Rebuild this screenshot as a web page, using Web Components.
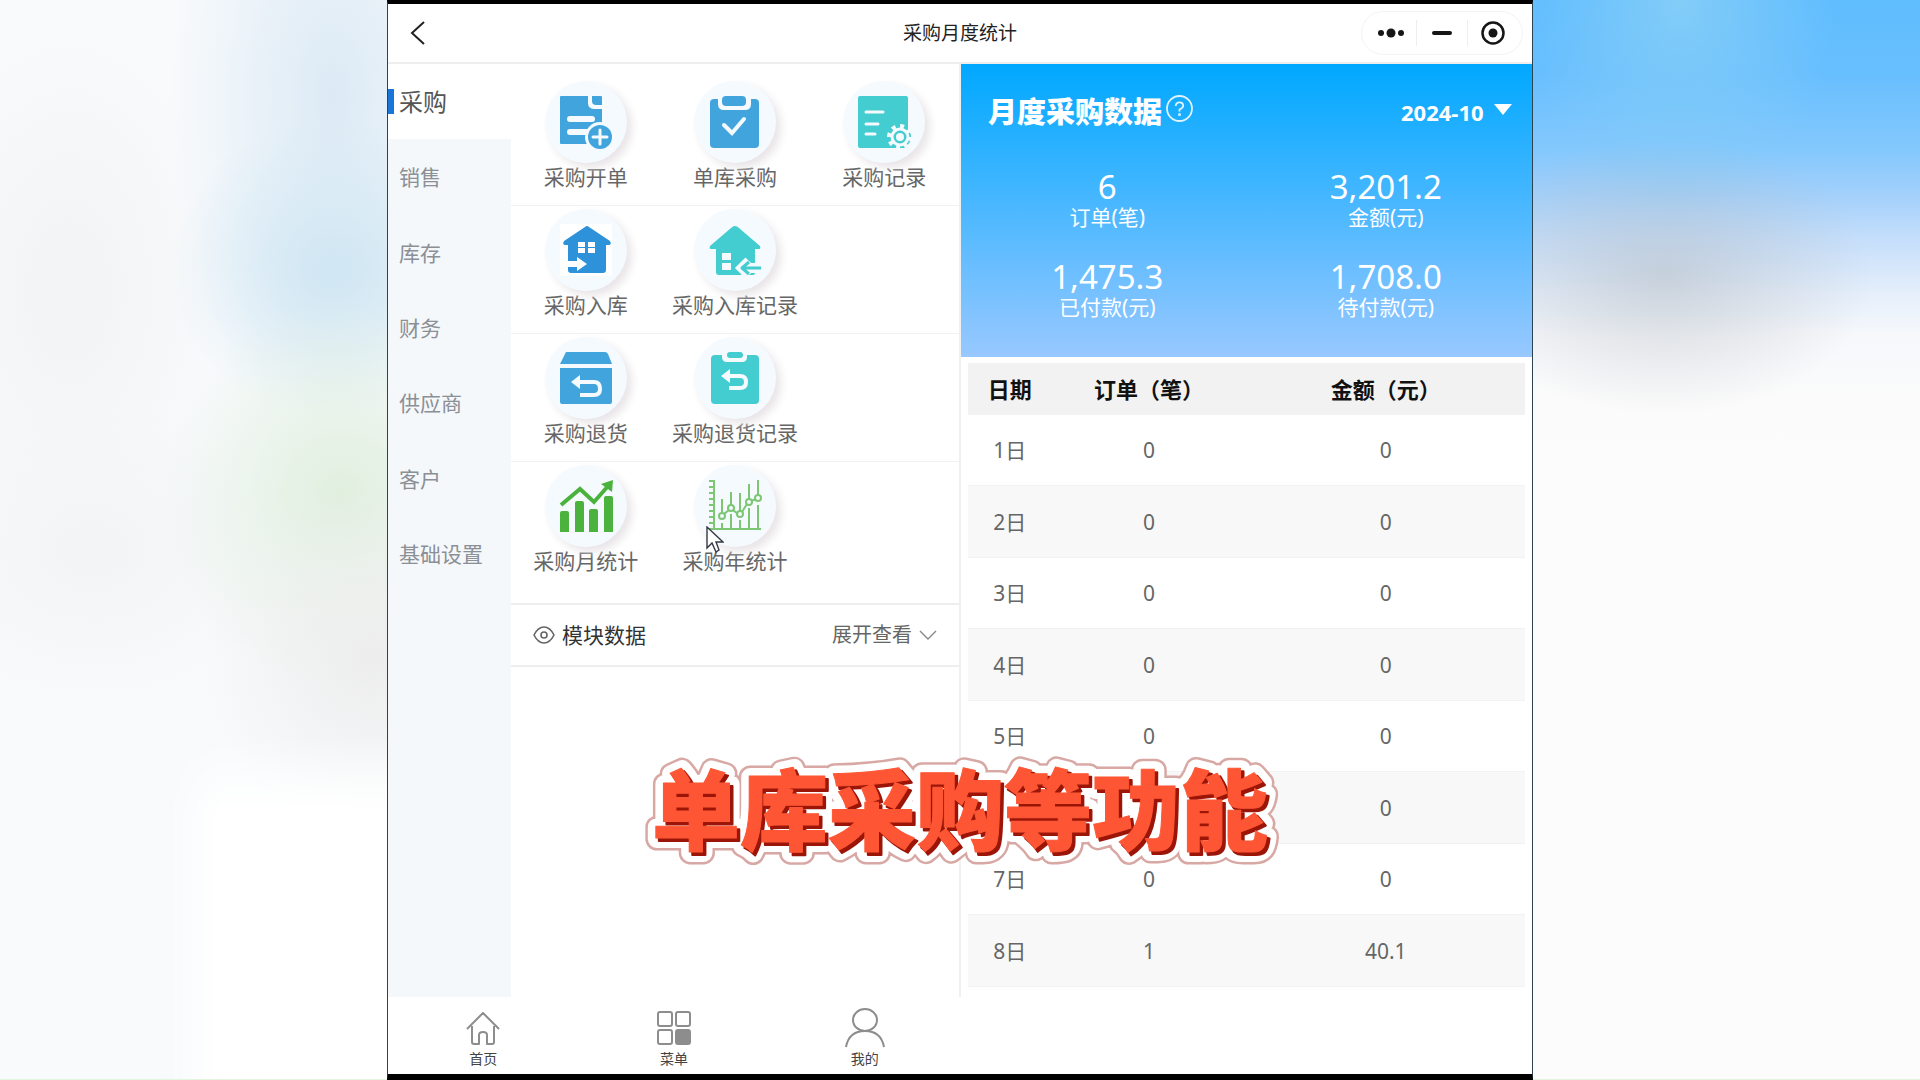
<!DOCTYPE html>
<html lang="zh-CN">
<head>
<meta charset="utf-8">
<title>采购月度统计</title>
<style>
  html, body { margin: 0; height: 100%; }
  body { font-family: "Noto Sans", "Noto Sans CJK SC", sans-serif; color: #333; background: #fcfcfc; overflow: hidden; }
</style>
</head>
<body>
<video-stage>
  <app-window>
    <title-bar slot="header">采购月度统计</title-bar>
    <side-nav slot="side"></side-nav>
    <module-menu slot="menu"></module-menu>
    <month-report slot="report"></month-report>
    <tab-bar slot="footer"></tab-bar>
  </app-window>
  <caption-text slot="caption" text="单库采购等功能"></caption-text>
</video-stage>

<script>
const define = (name, html, init) => {
  const tpl = document.createElement('template');
  tpl.innerHTML = '<style>*{box-sizing:border-box}button,select{font:inherit;color:inherit;background:none;border:0;margin:0;padding:0}a{color:inherit;text-decoration:none}svg{display:block}</style>' + html;
  customElements.define(name, class extends HTMLElement {
    constructor() { super(); this.attachShadow({ mode: 'open' }); }
    connectedCallback() {
      if (this.shadowRoot.firstChild) return;
      this.shadowRoot.append(tpl.content.cloneNode(true));
      if (init) init(this.shadowRoot, this);
    }
  });
};

const BLUE = '#41a4dd', TEAL = '#43cdd0', PALE = '#f5faff', GREEN = '#4bb33d', LIME = '#7cc674';
const icons = {
  order: `<path fill="${BLUE}" d="M1 0H28V7Q28 13 35 13H42V48H1Q0 48 0 47V1Q0 0 1 0Z"/><path fill="${BLUE}" d="M32 0H41Q42 0 42 1V9H36Q32 9 32 5Z"/>
    <path d="M10 23H32M10 36H30" stroke="${PALE}" stroke-width="6" stroke-linecap="round"/><circle cx="40" cy="41" r="15" fill="${PALE}"/><circle cx="40" cy="41" r="12" fill="${BLUE}"/><path d="M33 41H47M40 34V48" stroke="${PALE}" stroke-width="3" stroke-linecap="round"/>`,
  clip: `<rect x="1" y="3" width="49" height="49" rx="4" fill="${BLUE}"/><path fill="${PALE}" d="M9 0H42V8Q42 14 36 14H15Q9 14 9 8Z"/><rect x="13" y="0" width="24" height="10" rx="4" fill="${BLUE}"/>
    <path d="M15 29L23 37L35 23" fill="none" stroke="${PALE}" stroke-width="4" stroke-linecap="round"/>`,
  record: `<rect width="50" height="52" rx="2" fill="${TEAL}"/><path d="M8 16H25M8 28H20M8 38H17" stroke="${PALE}" stroke-width="3" stroke-linecap="round"/>
    <circle cx="42" cy="41" r="11" fill="${TEAL}"/><circle cx="42" cy="41" r="11" fill="none" stroke="${PALE}" stroke-width="4" stroke-dasharray="4 4.6"/><circle cx="42" cy="41" r="8" fill="none" stroke="${PALE}" stroke-width="3"/><circle cx="42" cy="41" r="4" fill="${PALE}"/>`,
  houseIn: `<rect width="52" height="52" fill="#fff"/><path fill="#2e92da" d="M25 3Q27 1 29 3L50 17Q52 21 49 21H46V46Q46 49 43 49H11Q8 49 8 46V21H5Q2 21 4 17Z"/>
    <path fill="#fff" d="M18 18h7v5h-7zM28 18h7v5h-7zM18 24h7v5h-7zM28 24h7v5h-7zM7 37H17V33L27 40L17 47V43H7Z"/>`,
  houseOut: `<path fill="${TEAL}" d="M22 4Q26 0 30 4L51 22Q52 25 50 25H46V49Q46 51 43 51H10Q7 51 7 48V25H2Q0 25 1 22Z"/><path fill="${PALE}" d="M13 29h9v7h-9zM13 39h9v7h-9z"/>
    <path d="M40 37L33 44L40 51M34 44H48" fill="none" stroke="${PALE}" stroke-width="10"/><path d="M40 38L33 44L40 50" fill="none" stroke="${TEAL}" stroke-width="3" stroke-linejoin="round"/><path d="M34 44H52" stroke="${TEAL}" stroke-width="3"/>`,
  boxBack: `<path fill="${BLUE}" d="M7 0H45Q47 0 48 2L52 12H0L5 2Q5 0 7 0ZM0 16H52V50Q52 52 50 52H2Q0 52 0 50Z"/><path d="M18 30H34Q40 30 40 37Q40 43 34 43H20" fill="none" stroke="${PALE}" stroke-width="4"/><path fill="${PALE}" d="M11 30L20 23V37Z"/>`,
  clipBack: `<rect x="2" y="3" width="48" height="49" rx="4" fill="${TEAL}"/><path fill="${PALE}" d="M13 0H38V5Q38 10 33 10H18Q13 10 13 5Z"/><rect x="18" y="0" width="16" height="6" rx="3" fill="${TEAL}"/><path d="M19 24H31Q37 24 37 30Q37 36 31 36H20" fill="none" stroke="${PALE}" stroke-width="4"/><path fill="${PALE}" d="M12 24L21 17V31Z"/>`,
  bars: `<path fill="${GREEN}" d="M0 33q0-2 2-2h5q2 0 2 2V52H0zM15 23q0-2 2-2h5q2 0 2 2V52H15zM29 31q0-2 2-2h5q2 0 2 2V52H29zM44 18q0-2 2-2h5q2 0 2 2V52H44z"/><path d="M1 25L20 9L34 22L49 5" fill="none" stroke="${GREEN}" stroke-width="4"/><path fill="${GREEN}" d="M41 4L53 0L52 12Z"/>`,
  trend: `<g fill="none" stroke="${LIME}" stroke-width="2"><path d="M5 0V49H52"/><path d="M0 1H4M0 7H4M0 13H4M0 19H4M0 25H4M0 31H4M0 37H4M0 43H4M0 49H4"/><path d="M13 19V32M13 43V48M22 12V25M22 34V48M31 13V31M31 40V48M40 4V19M40 28V48M49 0V15M49 25V48"/><path d="M15 34L20 30M24 30L29 34M33 32L38 24M42 21L47 19"/><circle cx="13" cy="36" r="3"/><circle cx="22" cy="28" r="3"/><circle cx="31" cy="34" r="3"/><circle cx="40" cy="22" r="3"/><circle cx="49" cy="18" r="3"/></g>`
};

/* Page: blurred side areas with the app window between them */
define('video-stage', `<style>
  :host { display: grid; grid-template-columns: 387fr 1146fr 387fr; height: 100vh; position: relative; }
  .side { border-bottom: 1px solid #e2f5dd; }
  .left { display: flex; justify-content: flex-end; align-items: flex-end; background:
    radial-gradient(ellipse 44% 16% at 96% 61%, #ededed 0%, #ededed00 100%),
    radial-gradient(ellipse 46% 18% at 88% 46%, #e0efde 0%, #e0efde00 100%),
    radial-gradient(ellipse 42% 14% at 86% 25%, #d1e7f3 8%, #d1e7f300 100%),
    radial-gradient(ellipse 42% 30% at 86% 9%, #dceaf5 0%, #dceaf500 100%),
    radial-gradient(ellipse 40% 24% at 18% 27%, #f3f4f5 20%, #f3f4f500 100%),
    radial-gradient(ellipse 50% 14% at 24% 51%, #f2f4f5 10%, #f2f4f500 100%), #f8fafc; }
  .left::after { content: ""; width: 58%; height: 32%; background: linear-gradient(90deg, #fff0, #fff 26%);
    -webkit-mask-image: linear-gradient(#0000, #000 24%); mask-image: linear-gradient(#0000, #000 24%); }
  .right { background:
    radial-gradient(ellipse 54% 13% at 34% 25.5%, #b4bac088 0%, #b4bac000 100%),
    radial-gradient(ellipse 40% 20% at 38% 0%, #82ccf8 0%, #82ccf800 100%),
    linear-gradient(#60bdfe 0%, #68bffe 7%, #84c8fd 14%, #a2d0fb 18%, #c4defb 22%, #e4eefb 27%, #f6f8fb 31%, #fbfbfb 37%, #fcfcfc 45%); }
  .caption { position: absolute; left: 0; right: 0; top: 70%; display: flex; justify-content: center; pointer-events: none; }
</style><div class="side left"></div><slot></slot><div class="side right"></div><div class="caption"><slot name="caption"></slot></div>`);

define('app-window', `<style>
  :host { display: flex; flex-direction: column; min-width: 0; background: #fff; border: solid #000; border-width: 4px 1px 6px; border-left-color: #2d4350; border-right-color: #2d4350; }
  .body { flex: 1; min-height: 0; display: grid; grid-template-columns: 123fr 450fr 571fr; }
</style><slot name="header"></slot><div class="body"><slot name="side"></slot><slot name="menu"></slot><slot name="report"></slot></div><slot name="footer"></slot>`);

define('title-bar', `<style>
  :host { display: grid; grid-template-columns: 1fr auto 1fr; align-items: center; height: 58px; border-bottom: 2px solid #eee; font-size: 19px; line-height: 28px; color: #222; }
  .back { justify-self: start; margin-left: 22px; }
  .capsule { justify-self: end; margin-right: 9px; padding: 0 4px; display: flex; align-items: center; width: 162px; height: 44px; border: 1px solid #f3f3f3; border-radius: 22px; }
  .capsule button { flex: 1; height: 26px; display: flex; align-items: center; justify-content: center; }
  .capsule button + button { border-left: 1px solid #eee; }
</style>
<button class="back" aria-label="返回"><svg width="17" height="24" viewBox="0 0 17 24" fill="none" stroke="#222" stroke-width="2"><path d="M14 1L2 12L14 23"/></svg></button>
<span><slot></slot></span>
<div class="capsule">
<button aria-label="更多"><svg width="28" height="12" viewBox="0 0 28 12" fill="#161616"><circle cx="4" cy="6" r="3"/><circle cx="14" cy="6" r="4.5"/><circle cx="24" cy="6" r="3"/></svg></button>
<button aria-label="最小化"><svg width="20" height="4" viewBox="0 0 20 4"><rect width="20" height="4" rx="2" fill="#161616"/></svg></button>
<button aria-label="关闭"><svg width="26" height="26" viewBox="0 0 26 26"><circle cx="13" cy="13" r="10.500" fill="none" stroke="#161616" stroke-width="2.500"/><circle cx="13" cy="13" r="4.500" fill="#161616"/></svg></button>
</div>`);

define('side-nav', `<style>
  :host { display: block; background: #f5f8fa; }
  nav { display: grid; grid-auto-rows: 1fr; height: 528px; }
  a { display: flex; align-items: center; padding-left: 11px; font-size: 21px; line-height: 28px; color: #8b8f96; position: relative; }
  a.on { background: #fff; font-size: 24px; color: #555; }
  a.on::before { content: ""; position: absolute; left: 0; width: 6px; height: 25px; background: #1976d8; }
</style><nav></nav>`, root => {
  root.querySelector('nav').innerHTML = ['采购', '销售', '库存', '财务', '供应商', '客户', '基础设置']
    .map((t, i) => `<a href="#"${i ? '' : ' class="on" aria-current="page"'}>${t}</a>`).join('');
});

define('menu-tile', `<style>
  :host { display: block; min-width: 0; }
  a { display: flex; flex-direction: column; align-items: center; padding-top: 3px; font-size: 21px; line-height: 28px; color: #666; white-space: nowrap; }
  .disc { position: relative; width: 82px; height: 82px; border-radius: 50%; background: ${PALE}; box-shadow: 5px 5px 8px #e9e5e8; display: flex; align-items: center; justify-content: center; }
  ::slotted(*) { position: absolute; left: 12px; top: 61px; }
</style><a href="#"><span class="disc"><svg width="52" height="52" viewBox="0 0 52 52" overflow="visible" aria-hidden="true"></svg><slot></slot></span><span class="label"></span></a>`, (root, el) => {
  root.querySelector('svg').innerHTML = icons[el.getAttribute('icon')];
  root.querySelector('.label').textContent = el.getAttribute('label');
});

define('mouse-pointer', `<style>:host { display: block; }</style>
<svg width="18" height="27" viewBox="0 0 18 27"><path d="M1 1V22L6 17L10 26L13 24L10 16H17Z" fill="#fff" stroke="#333845" stroke-width="1.4"/></svg>`);

define('module-menu', `<style>
  :host { display: block; min-width: 0; border-right: 2px solid #f0f0f0; }
  .rows { padding: 14px 0 13px; border-bottom: 2px solid #eee; }
  .row { display: grid; grid-template-columns: repeat(3, 1fr); height: 128px; border-bottom: 1px solid #f0f1f3; }
  .row:last-child { border: 0; }
  .fold { display: flex; align-items: center; width: 100%; height: 62px; padding: 0 22px; border-bottom: 2px solid #eee; font-size: 21px; line-height: 28px; color: #333; }
  .eye { margin-right: 7px; }
  .more { margin-left: auto; margin-right: 7px; font-size: 20px; color: #666; }
</style>
<div class="rows">
  <div class="row"><menu-tile icon="order" label="采购开单"></menu-tile><menu-tile icon="clip" label="单库采购"></menu-tile><menu-tile icon="record" label="采购记录"></menu-tile></div>
  <div class="row"><menu-tile icon="houseIn" label="采购入库"></menu-tile><menu-tile icon="houseOut" label="采购入库记录"></menu-tile></div>
  <div class="row"><menu-tile icon="boxBack" label="采购退货"></menu-tile><menu-tile icon="clipBack" label="采购退货记录"></menu-tile></div>
  <div class="row"><menu-tile icon="bars" label="采购月统计"></menu-tile><menu-tile icon="trend" label="采购年统计"><mouse-pointer></mouse-pointer></menu-tile></div>
</div>
<button class="fold"><svg class="eye" width="22" height="18" viewBox="0 0 22 18" fill="none" stroke="#666" stroke-width="1.6"><path d="M1 9Q5 1 11 1T21 9Q17 17 11 17T1 9Z"/><circle cx="11" cy="9" r="3"/></svg><span>模块数据</span><span class="more">展开查看</span><svg width="18" height="10" viewBox="0 0 18 10" fill="none" stroke="#888" stroke-width="1.4"><path d="M1 1L9 9L17 1"/></svg></button>`);

define('stat-cell', `<style>
  :host { display: flex; flex-direction: column; align-items: center; font-size: 21px; line-height: 26px; }
  .num { font-size: 33px; line-height: 34px; }
</style><span class="num"></span><slot></slot>`, (root, el) => { root.querySelector('.num').textContent = el.getAttribute('value'); });

define('day-table', `<style>
  :host { display: block; padding: 6px 7px 0; }
  table { width: 100%; table-layout: fixed; border-collapse: separate; border-spacing: 0; font-size: 21px; line-height: 28px; color: #666; text-align: center; }
  th, td { padding: 0; }
  th { height: 52px; background: #f2f2f2; color: #111; font-size: 22px; font-weight: 700; }
  td { height: 70px; }
  tr:nth-child(even) td { height: 73px; background: #f8f8f8; border: solid #f2f2f2; border-width: 1px 0; }
  .d { width: 15%; } .o { width: 35%; }
</style><table><thead><tr><th class="d">日期</th><th class="o">订单（笔）</th><th>金额（元）</th></tr></thead><tbody></tbody></table>`, root => {
  const days = [[0, 0], [0, 0], [0, 0], [0, 0], [0, 0], [0, 0], [0, 0], [1, 40.1]];
  root.querySelector('tbody').innerHTML = days.map(([n, sum], i) => `<tr><td>${i + 1}日</td><td>${n}</td><td>${sum}</td></tr>`).join('');
});

define('month-report', `<style>
  :host { display: block; min-width: 0; overflow: hidden; }
  .hero { height: 293px; padding: 30px 7px 0; background: linear-gradient(#00a8ff, #98c8ff); color: #fff; }
  .top { display: flex; align-items: center; height: 36px; padding: 0 13px 0 20px; }
  h1 { margin: 0 4px 0 0; font-size: 29px; line-height: 36px; font-weight: 900; }
  .help { margin-bottom: 8px; }
  .pick { margin-left: auto; display: flex; align-items: center; }
  select { appearance: none; font-size: 22px; line-height: 30px; font-weight: 700; margin-right: 10px; }
  option { color: #333; }
  .tri { margin-bottom: 6px; }
  .stats { display: grid; grid-template-columns: 1fr 1fr; row-gap: 30px; padding-top: 40px; }
</style>
<div class="hero"><div class="top"><h1>月度采购数据</h1>
<button class="help" aria-label="说明"><svg width="27" height="27" viewBox="0 0 27 27" fill="none" stroke="#dff4ff" stroke-width="1.8"><circle cx="13.5" cy="13.5" r="12.5"/><path d="M9.8 11Q9.8 7.400 13.5 7.400T17.200 10.800Q17.200 13 13.500 14.500V16.500"/><circle cx="13.5" cy="19.500" r=".6"/></svg></button>
<label class="pick"><select aria-label="月份"><option>2024-10</option></select><svg class="tri" width="18" height="11" viewBox="0 0 18 11" aria-hidden="true"><path d="M0 0H18L9 11Z" fill="#fff"/></svg></label></div>
<div class="stats"><stat-cell value="6">订单(笔)</stat-cell><stat-cell value="3,201.2">金额(元)</stat-cell><stat-cell value="1,475.3">已付款(元)</stat-cell><stat-cell value="1,708.0">待付款(元)</stat-cell></div></div>
<day-table></day-table>`);

define('tab-bar', `<style>
  :host { display: block; background: #fff; }
  nav { display: grid; grid-template-columns: repeat(6, 1fr); height: 77px; padding-top: 11px; }
  a { display: flex; flex-direction: column; align-items: center; font-size: 14px; line-height: 20px; color: #444; }
  svg { margin-bottom: 1px; }
</style><nav>
<a href="#"><svg width="40" height="40" viewBox="0 0 40 40" fill="none" stroke="#8d8d8d" stroke-width="2" stroke-linejoin="round"><path d="M4 21L20 5L36 21M9 18V34Q9 36 11 36H16V27Q16 24 20 24T24 27V36H29Q31 36 31 34V18"/></svg>首页</a>
<a href="#"><svg width="40" height="40" viewBox="0 0 40 40" fill="none" stroke="#8d8d8d" stroke-width="2"><rect x="4" y="4" width="14" height="14" rx="2"/><rect x="22" y="4" width="14" height="14" rx="2"/><rect x="4" y="22" width="14" height="14" rx="2"/><rect x="22" y="22" width="14" height="14" rx="2" fill="#8d8d8d"/></svg>菜单</a>
<a href="#"><svg width="40" height="40" viewBox="0 0 40 40" fill="none" stroke="#8d8d8d" stroke-width="2"><ellipse cx="20" cy="12" rx="12" ry="11"/><path d="M1 39Q4 23 20 23T39 39"/></svg>我的</a>
</nav>`);

/* Outlined caption: one text, reused for each of its outline layers */
define('caption-text', `<style>
  :host { display: block; }
  text { font: 900 88px "Noto Sans CJK SC", sans-serif; text-anchor: middle; }
  svg { stroke-linejoin: round; overflow: visible; }
</style><svg width="640" height="116" viewBox="0 0 640 116">
<use href="#line" x="1" y="1" fill="#d8a8a4" stroke="#d8a8a4" stroke-width="23"/>
<use href="#line" x="1" y="1" fill="#fff" stroke="#fff" stroke-width="18"/>
<use href="#line" x="3" y="3" fill="#9c1509" stroke="#9c1509" stroke-width="2"/>
<g fill="#fe5634" stroke="#fe5634" stroke-width="1"><text id="line" x="320" y="87"></text></g></svg>`, (root, el) => {
  root.getElementById('line').textContent = el.getAttribute('text');
});
</script>
</body>
</html>
